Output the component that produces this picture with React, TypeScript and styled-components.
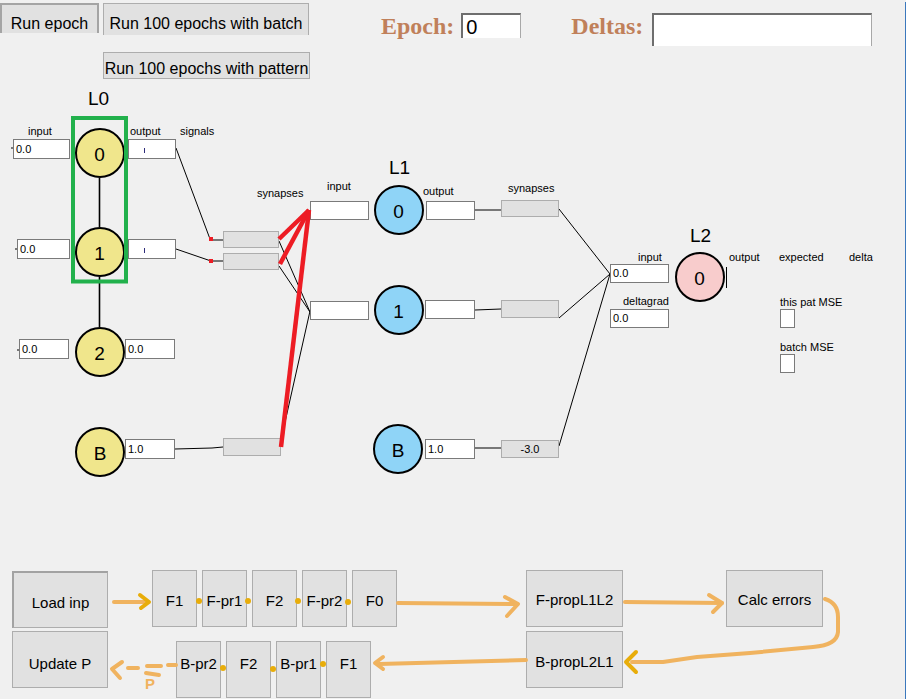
import styled, { createGlobalStyle } from 'styled-components'

const GlobalStyle = createGlobalStyle`
  html, body {
    margin: 0;
    padding: 0;
    background: #f0f0f0;
  }
  body {
    font-family: "Liberation Sans", Arial, sans-serif;
    color: #000;
  }
`

// page y where the network canvas starts (the toolbar sits above it)
const TOP = 85
const CANVAS_H = 480
const FLOW_TOP = 570

const KHAKI = '#f0e68c'
const SKY = '#8fd4f7'
const PINK = '#f8cccc'
const ORANGE = '#f0b35f'
const GOLD = '#e8ad0a'
const RED = '#ed1c24'

type Box = { x: number; y: number; w: number; h: number; text?: string; caret?: boolean }

const Page = styled.div`
  position: relative;
  width: 906px;
  height: 699px;
  overflow: hidden;
  background: #f0f0f0;

  &::after {
    content: '';
    position: absolute;
    right: 0;
    top: 2px;
    bottom: 0;
    width: 1px;
    background: #3b78bd;
  }
`

/* ---------- toolbar ---------- */

const Toolbar = styled.div`
  display: flex;
  align-items: flex-start;
  height: ${TOP}px;
`

const ButtonColumn = styled.div`
  display: flex;
  flex-direction: column;
  align-items: flex-start;
  margin-left: 4px;
`

const ToolButton = styled.div<{ $w: number; $h: number; $top: number; $pt: number; $focused?: boolean; $open?: boolean }>`
  box-sizing: border-box;
  width: ${(p) => p.$w}px;
  height: ${(p) => p.$h}px;
  margin-top: ${(p) => p.$top}px;
  padding-top: ${(p) => p.$pt}px;
  background: #e1e1e1;
  border: ${(p) => (p.$focused ? '2px solid #a4a4a4' : '1px solid #adadad')};
  border-bottom: ${(p) => (p.$open ? 'none' : '1px solid #adadad')};
  font-size: 16px;
  line-height: 18px;
  text-align: center;
  white-space: nowrap;
`

const StatLabel = styled.div<{ $left: number }>`
  margin-left: ${(p) => p.$left}px;
  margin-top: 13px;
  font-family: "Liberation Serif", "Times New Roman", serif;
  font-weight: 700;
  font-size: 24px;
  line-height: 26px;
  color: #c0805a;
`

const StatBox = styled.div<{ $left: number; $w: number; $h: number }>`
  box-sizing: border-box;
  margin-left: ${(p) => p.$left}px;
  margin-top: 13px;
  width: ${(p) => p.$w}px;
  height: ${(p) => p.$h}px;
  overflow: hidden;
  background: #fff;
  border-top: 2px solid #6e6e6e;
  border-left: 2px solid #6e6e6e;
  border-right: 1px solid #a8a8a8;
  padding: 2px 0 0 3px;
  font-size: 20px;
  line-height: 20px;
`

/* ---------- network canvas ---------- */

const Canvas = styled.div`
  position: relative;
  height: ${CANVAS_H}px;
`

const Layer = styled.svg`
  position: absolute;
  left: 0;
  top: 0;
  width: 906px;
  height: ${CANVAS_H}px;
  pointer-events: none;
`

const Neuron = styled.div<{ $x: number; $y: number; $fill: string }>`
  position: absolute;
  left: ${(p) => p.$x - 25}px;
  top: ${(p) => p.$y - TOP - 25}px;
  width: 50px;
  height: 50px;
  box-sizing: border-box;
  border: 2px solid #000;
  border-radius: 50%;
  background: ${(p) => p.$fill};
  display: flex;
  align-items: center;
  justify-content: center;
  padding-top: 3px;
  font-size: 19px;
`

const Field = styled.div<{ $x: number; $y: number; $w: number; $h: number }>`
  position: absolute;
  left: ${(p) => p.$x}px;
  top: ${(p) => p.$y - TOP}px;
  width: ${(p) => p.$w}px;
  height: ${(p) => p.$h}px;
  box-sizing: border-box;
  background: #fff;
  border: 1px solid #7a7a7a;
  padding-left: 2px;
  font-size: 11px;
  line-height: ${(p) => p.$h - 2}px;
  white-space: nowrap;
  overflow: hidden;
`

const Synapse = styled(Field)`
  background: #e1e1e1;
  border-color: #adadad;
  padding-left: 0;
  text-align: center;
`

const Caret = styled.span`
  display: inline-block;
  width: 1px;
  height: 5px;
  margin-left: 13px;
  vertical-align: middle;
  background: #2d2a7a;
`

const Caption = styled.div<{ $x: number; $y: number }>`
  position: absolute;
  left: ${(p) => p.$x}px;
  top: ${(p) => p.$y - TOP}px;
  font-size: 11px;
  line-height: 12px;
  white-space: nowrap;
`

const LayerTitle = styled.div<{ $x: number; $y: number }>`
  position: absolute;
  left: ${(p) => p.$x}px;
  top: ${(p) => p.$y - TOP}px;
  font-size: 19px;
  line-height: 20px;
`

/* ---------- step pipeline ---------- */

const Pipeline = styled.div`
  position: relative;
  margin-top: ${FLOW_TOP - TOP - CANVAS_H}px;
  height: ${699 - FLOW_TOP}px;
`

const FlowRow = styled.div<{ $top?: number }>`
  display: flex;
  align-items: flex-start;
  margin-top: ${(p) => p.$top ?? 0}px;
`

const StepGroup = styled.div<{ $left: number; $top?: number }>`
  display: flex;
  gap: 5px;
  margin-left: ${(p) => p.$left}px;
  margin-top: ${(p) => p.$top ?? 0}px;
`

const Step = styled.div<{ $w?: number; $left?: number; $top?: number; $pt: number }>`
  box-sizing: border-box;
  width: ${(p) => p.$w ?? 45}px;
  height: 57px;
  margin-left: ${(p) => p.$left ?? 0}px;
  margin-top: ${(p) => p.$top ?? 0}px;
  padding-top: ${(p) => p.$pt}px;
  background: #e1e1e1;
  border: 1px solid #adadad;
  font-size: 15px;
  line-height: 17px;
  text-align: center;
  white-space: nowrap;
`

const ActionButton = styled(Step)`
  border-top: 2px solid #a2a2a2;
  border-left: 2px solid #a2a2a2;
`

const FlowArrows = styled.svg`
  position: absolute;
  left: 0;
  top: 0;
  width: 906px;
  height: ${699 - FLOW_TOP}px;
  pointer-events: none;
`

/* ---------- data ---------- */

const neurons = [
  { x: 99.5, y: 153, label: '0', fill: KHAKI },
  { x: 99.5, y: 252, label: '1', fill: KHAKI },
  { x: 99.5, y: 352, label: '2', fill: KHAKI },
  { x: 100, y: 452, label: 'B', fill: KHAKI },
  { x: 398.5, y: 210, label: '0', fill: SKY },
  { x: 398.5, y: 310, label: '1', fill: SKY },
  { x: 398, y: 449, label: 'B', fill: SKY },
  { x: 699.5, y: 277, label: '0', fill: PINK },
]

const fields: Box[] = [
  { x: 13, y: 139, w: 57, h: 20, text: '0.0' },
  { x: 17, y: 239, w: 53, h: 20, text: '0.0' },
  { x: 19, y: 339, w: 50, h: 20, text: '0.0' },
  { x: 128, y: 139, w: 48, h: 20, caret: true },
  { x: 128, y: 239, w: 48, h: 20, caret: true },
  { x: 125, y: 339, w: 50, h: 20, text: '0.0' },
  { x: 125, y: 439, w: 50, h: 20, text: '1.0' },
  { x: 310, y: 201, w: 59, h: 19 },
  { x: 310, y: 301, w: 59, h: 19 },
  { x: 426, y: 201, w: 49, h: 19 },
  { x: 425, y: 300, w: 50, h: 19 },
  { x: 425, y: 439, w: 50, h: 20, text: '1.0' },
  { x: 610, y: 264, w: 59, h: 19, text: '0.0' },
  { x: 610, y: 309, w: 59, h: 19, text: '0.0' },
  { x: 780, y: 309, w: 15, h: 19 },
  { x: 780, y: 354, w: 15, h: 19 },
]

const synapses: Box[] = [
  { x: 223, y: 231, w: 56, h: 17 },
  { x: 223, y: 253, w: 56, h: 17 },
  { x: 223, y: 438, w: 58, h: 18 },
  { x: 501, y: 200, w: 58, h: 17 },
  { x: 501, y: 300, w: 58, h: 18 },
  { x: 501, y: 440, w: 58, h: 18, text: '-3.0' },
]

const captions = [
  { x: 28, y: 125, text: 'input' },
  { x: 130, y: 125, text: 'output' },
  { x: 180, y: 125, text: 'signals' },
  { x: 257, y: 187, text: 'synapses' },
  { x: 327, y: 180, text: 'input' },
  { x: 423, y: 185, text: 'output' },
  { x: 508, y: 182, text: 'synapses' },
  { x: 638, y: 251, text: 'input' },
  { x: 623, y: 295, text: 'deltagrad' },
  { x: 729, y: 251, text: 'output' },
  { x: 779, y: 251, text: 'expected' },
  { x: 849, y: 251, text: 'delta' },
  { x: 780, y: 296, text: 'this pat MSE' },
  { x: 780, y: 341, text: 'batch MSE' },
]

const titles = [
  { x: 88, y: 89, text: 'L0' },
  { x: 389, y: 158, text: 'L1' },
  { x: 690, y: 226, text: 'L2' },
]

// thin black wires, page coordinates
const wires = [
  'M176 148 L210 239',
  'M176 249 L211 261',
  'M213 240 L223 240',
  'M213 261 L223 261',
  'M175 449 L212 448 L223 447',
  'M279 241 L310 312',
  'M279 266 L310 312',
  'M281 440 L310 311',
  'M475 210 L501 210',
  'M475 310 L501 309',
  'M475 448 L501 448',
  'M559 209 L610 274',
  'M559 318 L610 274',
  'M559 446 L610 274',
  'M11 148 L13 148',
  'M15 249 L17 249',
  'M17 350 L19 350',
  'M726.5 267 L726.5 288',
]

const forwardSteps = ['F1', 'F-pr1', 'F2', 'F-pr2', 'F0']
const backwardSteps = ['B-pr2', 'F2', 'B-pr1', 'F1']
const flowDots = [
  [199, 601],
  [248, 601],
  [298, 601],
  [348, 602],
  [323, 664],
  [273, 669],
  [223, 668],
]

export default function App() {
  return (
    <Page>
      <GlobalStyle />

      <Toolbar>
        <ToolButton $w={99} $h={30} $top={3} $pt={10} $focused $open>
          Run epoch
        </ToolButton>
        <ButtonColumn>
          <ToolButton $w={206} $h={32} $top={3} $pt={11} $open>
            Run 100 epochs with batch
          </ToolButton>
          <ToolButton $w={207} $h={27} $top={17} $pt={7}>
            Run 100 epochs with pattern
          </ToolButton>
        </ButtonColumn>
        <StatLabel $left={71}>Epoch:</StatLabel>
        <StatBox $left={7} $w={60} $h={25}>0</StatBox>
        <StatLabel $left={50}>Deltas:</StatLabel>
        <StatBox $left={9} $w={220} $h={33} />
      </Toolbar>

      <Canvas>
        <Layer viewBox={`0 ${TOP} 906 ${CANVAS_H}`}>
          <g stroke="#000" strokeWidth={1} fill="none">
            {wires.map((d) => (
              <path key={d} d={d} />
            ))}
            <path d="M99.5 178 L99.5 227 M99.5 277 L99.5 327" strokeWidth={1.6} />
          </g>
          <rect x={209} y={237} width={4} height={4} fill={RED} />
          <rect x={209} y={259} width={4} height={4} fill={RED} />
        </Layer>

        {titles.map((t) => (
          <LayerTitle key={t.text} $x={t.x} $y={t.y}>
            {t.text}
          </LayerTitle>
        ))}
        {captions.map((c) => (
          <Caption key={`${c.x}-${c.y}`} $x={c.x} $y={c.y}>
            {c.text}
          </Caption>
        ))}
        {neurons.map((n) => (
          <Neuron key={`${n.x}-${n.y}`} $x={n.x} $y={n.y} $fill={n.fill}>
            {n.label}
          </Neuron>
        ))}
        {fields.map((f) => (
          <Field key={`${f.x}-${f.y}`} $x={f.x} $y={f.y} $w={f.w} $h={f.h}>
            {f.caret ? <Caret /> : f.text}
          </Field>
        ))}
        {synapses.map((s) => (
          <Synapse key={`${s.x}-${s.y}`} $x={s.x} $y={s.y} $w={s.w} $h={s.h}>
            {s.text}
          </Synapse>
        ))}

        {/* hand-drawn notes over the network */}
        <Layer viewBox={`0 ${TOP} 906 ${CANVAS_H}`}>
          <rect x={73} y={118} width={53} height={163.5} fill="none" stroke="#22b14c" strokeWidth={4} />
          <g stroke={RED} strokeWidth={4.5} fill="none" strokeLinejoin="round">
            <path d="M279 239 L309 210" />
            <path d="M280 264 L309 210" />
            <path d="M281 447 L309 210" />
          </g>
        </Layer>
      </Canvas>

      <Pipeline>
        <FlowRow>
          <ActionButton $w={96} $left={12} $top={1} $pt={21}>
            Load inp
          </ActionButton>
          <StepGroup $left={44}>
            {forwardSteps.map((s) => (
              <Step key={s} $pt={21}>
                {s}
              </Step>
            ))}
          </StepGroup>
          <Step $w={97} $left={129} $pt={20}>
            F-propL1L2
          </Step>
          <Step $w={97} $left={103} $pt={20}>
            Calc errors
          </Step>
        </FlowRow>
        <FlowRow $top={3}>
          <Step $w={96} $left={12} $pt={23}>
            Update P
          </Step>
          <StepGroup $left={68} $top={10}>
            {backwardSteps.map((s) => (
              <Step key={s} $pt={13}>
                {s}
              </Step>
            ))}
          </StepGroup>
          <Step $w={97} $left={155} $pt={21}>
            B-propL2L1
          </Step>
        </FlowRow>

        <FlowArrows viewBox={`0 ${FLOW_TOP} 906 ${699 - FLOW_TOP}`}>
          <g stroke={ORANGE} strokeWidth={4} fill="none" strokeLinecap="round" strokeLinejoin="round">
            <path d="M114 602 L146 602" />
            <path d="M398 603 L517 604" />
            <path d="M505 597 L518 604 L507 616" />
            <path d="M625 602 L722 603" />
            <path d="M709 595 L722 603 L713 612" />
            <path d="M825 599 Q838 603 838 617 L838 632 Q837 645 813 647 L750 653 L697 657 L663 662 L632 662" />
            <path d="M526 660 L379 664" />
            <path d="M383 657 L375 663 L383 669" />
            <path d="M168 665 L176 665 M147 666 L161 666 M128 668 L138 668" />
            <path d="M122 662 L112 669 L120 678" />
            <path d="M146 673 L159 675" />
          </g>
          <g stroke={GOLD} strokeWidth={4} fill="none" strokeLinecap="round" strokeLinejoin="round">
            <path d="M140 595 L149 602 L141 608" />
            <path d="M636 652 L626 662 L636 672" />
          </g>
          {flowDots.map(([x, y]) => (
            <circle key={`${x}-${y}`} cx={x} cy={y} r={3} fill={GOLD} />
          ))}
          <text x={145} y={689} fill={ORANGE} fontSize={15} fontWeight={700} fontFamily="Liberation Sans, Arial, sans-serif">
            P
          </text>
        </FlowArrows>
      </Pipeline>
    </Page>
  )
}
